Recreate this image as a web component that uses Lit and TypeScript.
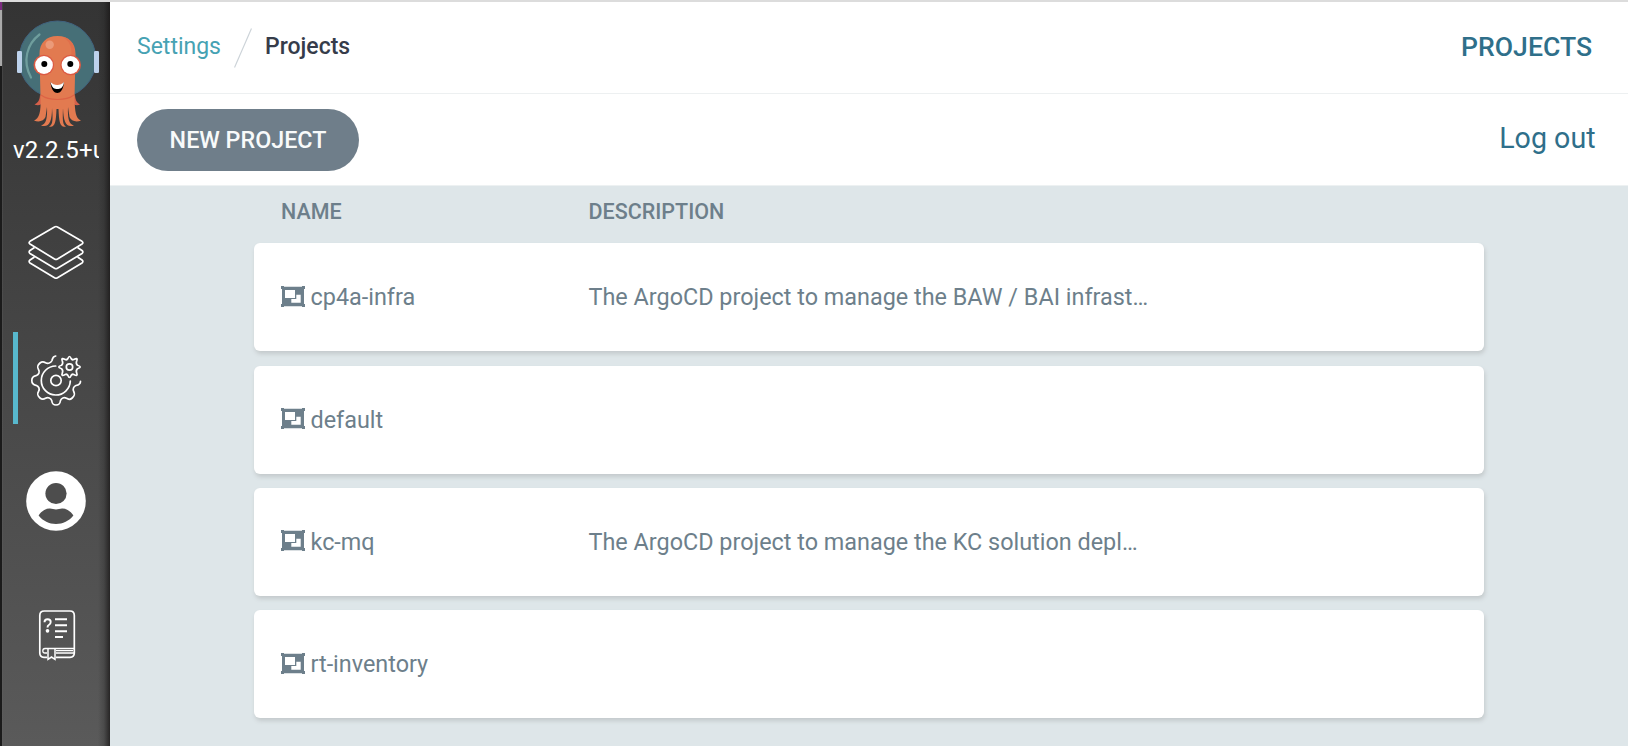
import { LitElement, html, css, svg } from "lit";
import { customElement, property } from "lit/decorators.js";

const argo = svg`
<svg class="argo" viewBox="12 15 92 118" width="92" height="118">
  <circle cx="57.5" cy="59.500" r="38.5" fill="#466f77" stroke="#41637f" stroke-width="1"/>
  <path d="M39.5 34.5C27 44 22 61 31 77.5" fill="none" stroke="#6f9e9d" stroke-width="2.2" stroke-linecap="round"/>
  <rect x="17" y="51" width="5" height="22" rx="1.3" fill="#bdd2ec"/>
  <rect x="94" y="51" width="5" height="22" rx="1.3" fill="#bdd2ec"/>
  <path d="M40 94C40 100 38 103 34.500 104.500C38 106 42 105 43 102ZM75 94C75 100 77 103 80 104.500C77 106 73 105 72 102Z" fill="#d5604a"/>
  <path d="M39.500 54C39.500 43 46 36 57.500 36S75.500 43 75.500 54L74.500 98C75 112 75.500 118 81 120.500C76 122.500 71 121 69.500 117L68 107C67.500 119 69 124 74 125.500C66 128 63.500 122 63 108C62.500 119 62.500 125 66 126.500C60 128 59 122 58.500 109H56.500C56 122 55 128 49 126.500C53 125 53 119 52 108C52 122 49 128 41 125.500C46 124 47.500 119 47 107L45.500 117C44 121 39 122.500 34 120.500C39.500 118 41 112 40.500 98Z" fill="#e27a50"/>
  <path d="M41 95C49 101 66 101 74 95" fill="none" stroke="#dd6245" stroke-width="1.200"/>
  <path d="M63 37C73 43 73 54 69 62L75 60V54C75 44 70 38 63 37Z" fill="#df6748" opacity=".6"/>
  <circle cx="49.700" cy="44.800" r="4.200" fill="#eb9a79"/>
  <circle cx="43.800" cy="65" r="10.300" fill="#dc5a43"/><circle cx="70.700" cy="65" r="10.300" fill="#dc5a43"/>
  <circle cx="44" cy="65" r="8.900" fill="#fff"/><circle cx="70.500" cy="65" r="8.900" fill="#fff"/>
  <circle cx="44.300" cy="64" r="3" fill="#000"/><circle cx="70.300" cy="64" r="3" fill="#000"/>
  <path d="M50.500 82C54 87 60.500 87 64 82C63.500 90 60 93 57.300 93S51 90 50.500 82Z" fill="#000"/>
  <path d="M50.500 82C54 86 60.500 86 64 82C63 88.500 60 89 57.300 89S52 88.500 50.500 82Z" fill="#fff"/>
</svg>`;

const layers = svg`
<svg viewBox="26 223 60 60" width="60" height="60" fill="none" stroke="#fff" stroke-width="1.700" stroke-linejoin="round">
  <path d="M54.500 227Q56 226 57.500 227L82 241.300Q83.800 242.700 82 244L57.500 259Q56 259.800 54.500 259L30 244Q28.200 242.700 30 241.300Z"/>
  <path d="M34.500 247.500L30 250.500Q28.200 252 30 253.500L54.500 268.300Q56 269.200 57.500 268.300L82 253.500Q83.800 252 82 250.500L77.500 247.500"/>
  <path d="M34.500 257L30 260Q28.200 261.500 30 263L54.500 277.800Q56 278.700 57.500 277.800L82 263Q83.800 261.500 82 260L77.500 257"/>
</svg>`;

const gears = svg`
<svg viewBox="26 350 60 60" width="60" height="60" fill="none" stroke="#fff" stroke-width="1.700" stroke-linecap="round" stroke-linejoin="round">
  <path d="M55.700 356C52.500 356.500 52.500 358.500 52 360.500C51 363 48 364 45.500 362.700C43.500 361.300 42 361.200 40 363C37.200 365.500 37 367 38.500 369.500C40 372 39 374.500 36 375.700C33 376.300 31.800 377.500 31.800 380.500S33 384.700 36 385.300C39 386.500 40 389 38.500 391.500C37 394 37.200 395.500 40 398C42 399.800 43.500 399.700 45.500 398.300C48 397 51 398 51.700 400.500C52.200 404 53 405 56 405S60 404 60.500 400.500C61.300 398 64 397 66.500 398.300C68.500 399.700 70.200 399.800 72.200 398C75 395.500 75 394 73.700 391.500C72.500 389 73.500 386.500 76 385.500C79 385 80.500 384 80.500 381.300"/>
  <path d="M55.700 366A14.500 14.500 0 1 0 70.300 381"/>
  <circle cx="56" cy="380.500" r="5.200"/>
  <circle cx="69.500" cy="367" r="3.200"/>
  <path d="M67.900 358.500Q69.500 354.500 71.100 358.500Q72 360.300 73.800 359.500Q78 357.200 76.800 360.500Q75.500 363.500 77.500 365.300Q83 367 77.500 368.700Q75.500 370.500 76.800 373.500Q78 376.800 73.800 374.500Q72 373.700 71.100 375.500Q69.500 379.500 67.900 375.500Q67 373.700 65.200 374.500Q61 376.800 62.200 373.500Q63.500 370.500 61.500 368.700Q56 367 61.500 365.300Q63.500 363.500 62.200 360.500Q61 357.200 65.200 359.500Q67 360.300 67.900 358.500Z"/>
</svg>`;

const user = svg`
<svg viewBox="26 471 60 60" width="60" height="60">
  <circle cx="56" cy="501" r="29.800" fill="#fff"/>
  <circle cx="56" cy="493.500" r="10.600" fill="#4d4d4d"/>
  <path d="M38.600 515.500C42 510.500 46.500 508.300 50 508.600C54 509.700 58 509.700 62 508.600C65.500 508.300 70 510.500 73.400 515.500C69 521 63 524 56 524S43 521 38.600 515.500Z" fill="#4f4f4f"/>
</svg>`;

const book = svg`
<svg viewBox="26 606 60 60" width="60" height="60" fill="none" stroke="#fff" stroke-width="1.700">
  <path d="M47 657.300H44Q39.800 657 39.800 653V615.500Q39.800 611 44.300 611H70Q74.300 611 74.300 615.500V653Q74.300 657.300 70 657.300H56"/>
  <path d="M74 648.500H45Q42.800 648.500 42.800 650.800T45 653H47M56 653H74M56 650.700H73" stroke-width="1.300"/>
  <path d="M48 649V659.300L51.500 657L55 659.300V649" stroke-width="1.500"/>
  <path d="M55 619.300H67M55 625.300H67M55 631.300H67M55 637H63" stroke-width="1.900"/>
  <path d="M44.500 622.300Q44.500 619.200 47.600 619.200T50.700 622Q50.700 624 48.800 625Q47.500 625.800 47.500 627.500" stroke-width="1.900"/>
  <circle cx="47.500" cy="630.800" r="1" fill="#fff"/>
</svg>`;

const group = svg`
<svg class="group" viewBox="0 0 24 21" width="24" height="21">
  <path fill="currentColor" fill-rule="evenodd" d="M0 0H3V.8H21V0H24V3H23V18H24V21H21V20.200H3V21H0V18H1V3H0ZM4 4V12H14V4ZM15.300 8.700V13H10.300V16.700H19.700V8.700Z"/>
</svg>`;

@customElement("project-row")
class ProjectRow extends LitElement {
  @property() name = "";
  @property() description = "";
  static styles = css`
    :host { display: flex; align-items: center; height: 108px; box-sizing: border-box; padding: 0 27px; background: #fff; border-radius: 6px; box-shadow: 1px 3px 4px #c4cacc; color: #6d7f8b; font-size: 23.400px; line-height: 32px; }
    .name { display: flex; align-items: center; gap: 5.500px; width: 307.500px; }
    .group { flex: none; margin-top: -2px; }
    .description { white-space: nowrap; }
  `;
  render() {
    return html`<div class="name">${group}<span>${this.name}</span></div><div class="description">${this.description}</div>`;
  }
}

const projects = [
  ["cp4a-infra", "The ArgoCD project to manage the BAW / BAI infrast…"],
  ["default", ""],
  ["kc-mq", "The ArgoCD project to manage the KC solution depl…"],
  ["rt-inventory", ""],
];

@customElement("app-root")
class AppRoot extends LitElement {
  static styles = css`
    :host { display: flex; width: 1628px; height: 746px; box-sizing: border-box; border-top: 2px solid #dcdcdc; overflow: hidden; background: #dee6e9; font-family: Roboto, sans-serif; color: #6d7f8b; }
    .edge { width: 2px; flex: none; background: linear-gradient(#7c2c80 0 8px, #aaa 8px 64px, #1b1b1b 64px); }
    .sidebar { width: 108px; flex: none; display: flex; flex-direction: column; align-items: center; box-sizing: border-box; background: linear-gradient(90deg, #6668 0, #6660 1px, transparent 96px, #2224 102px, #1a1818cc 108px), linear-gradient(#343434, #5a5a5a); }
    .argo { margin: 13px 0 0 4px; display: block; }
    .version { width: 86px; margin-top: 2px; overflow: hidden; white-space: nowrap; color: #fff; font-size: 24px; line-height: 30px; letter-spacing: .2px; }
    .item { width: 100%; height: 92px; display: flex; align-items: center; justify-content: center; }
    .item svg { display: block; }
    .layers { margin-top: 42px; }
    .gears { margin-top: 33px; border-left: 5px solid #58b8cd; width: 86px; box-sizing: border-box; padding-right: 5px; padding-top: 4px; }
    .user { margin-top: 31px; }
    .book { margin-top: 43px; }
    .main { flex: 1; min-width: 0; }
    .bar { display: flex; align-items: center; justify-content: space-between; background: #fff; box-sizing: border-box; padding: 0 32.500px 2px 27px; }
    .top { height: 92px; border-bottom: 1px solid #edf0f1; padding-right: 36px; }
    .tools { height: 92px; border-bottom: 1px solid #edf1f2; padding-bottom: 0; }
    .crumbs { display: flex; align-items: center; font-size: 23px; line-height: 30px; }
    .crumbs a { color: #46a2b3; }
    .crumbs svg { margin: 2px 13px 0; display: block; }
    .crumbs b { font-weight: 500; color: #363c4a; }
    .title { color: #2f6f8a; font-size: 26.600px; font-weight: 500; margin-top: -1px; }
    .new { height: 62px; width: 222px; border: 0; padding: 0; border-radius: 31px; background: #6f7e8a; color: #f8fafa; font: 500 23.300px Roboto, sans-serif; }
    .logout { color: #2f6f8a; font-size: 28.600px; margin-top: -3px; }
    .table { margin: 0 144px; display: grid; gap: 14.300px; }
    .head { display: flex; padding: 8px 27px 0; height: 43px; align-items: center; box-sizing: border-box; font-size: 21.500px; font-weight: 500; }
    .head span:first-child { width: 307.500px; }
  `;
  render() {
    return html`
      <div class="edge"></div>
      <nav class="sidebar">
        ${argo}
        <div class="version">v2.2.5+unknown</div>
        <div class="item layers">${layers}</div>
        <div class="item gears">${gears}</div>
        <div class="item user">${user}</div>
        <div class="item book">${book}</div>
      </nav>
      <div class="main">
        <div class="bar top">
          <div class="crumbs"><a>Settings</a>
            <svg width="18" height="40" viewBox="0 0 18 40"><path d="M17.500 0.500L.5 39.500" stroke="#ccd3d8" stroke-width="1.200"/></svg>
            <b>Projects</b></div>
          <div class="title">PROJECTS</div>
        </div>
        <div class="bar tools"><button class="new">NEW PROJECT</button><a class="logout">Log out</a></div>
        <div class="table">
          <div class="head"><span>NAME</span><span>DESCRIPTION</span></div>
          ${projects.map(([n, d]) => html`<project-row .name=${n} .description=${d}></project-row>`)}
        </div>
      </div>`;
  }
}
